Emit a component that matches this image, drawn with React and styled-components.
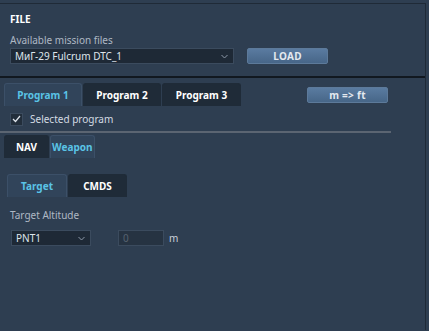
import React from 'react';
import styled, { createGlobalStyle } from 'styled-components';

const Global = createGlobalStyle`
  html, body {
    margin: 0;
    padding: 0;
    background: #2e3e51;
  }
  body {
    font-family: "Noto Sans", "DejaVu Sans", sans-serif;
    color: #d8dee6;
  }
`;

const Frame = styled.div`
  width: 429px;
  height: 331px;
  box-sizing: border-box;
  padding-top: 3px;
  background: #2e3e51;
  overflow: hidden;
`;

const Panel = styled.div`
  border-top: 1px solid #1f2a37;
  border-right: 1px solid #1f2a37;
  width: 426px;
  height: 327px;
  box-sizing: border-box;
`;

const FileSection = styled.section`
  padding: 9px 10px 0 10px;
  height: 72px;
  box-sizing: border-box;
`;

const Heading = styled.div`
  font-size: 10px;
  font-weight: 700;
  color: #ffffff;
  line-height: 12px;
`;

const Label = styled.div`
  font-size: 10px;
  color: #aeb8c4;
  line-height: 12px;
  margin-top: ${p => p.$top || 0}px;
  margin-left: ${p => p.$left || 0}px;
`;

const Row = styled.div`
  display: flex;
  align-items: center;
  margin-top: ${p => p.$top || 0}px;
  margin-left: ${p => p.$left || 0}px;
`;

const Select = styled.div`
  width: ${p => p.$w}px;
  height: 16px;
  box-sizing: border-box;
  background: #1e2936;
  border: 1px solid #3b4b5e;
  display: flex;
  align-items: center;
  justify-content: space-between;
  padding: 0 5px 0 4px;
  font-size: 10px;
  color: #dfe5ec;
`;

const Chevron = () => (
  <svg width="7" height="5" viewBox="0 0 7 5">
    <path d="M0.5 1 L3.5 4 L6.5 1" fill="none" stroke="#8c99a8" strokeWidth="1" />
  </svg>
);

const Button = styled.button`
  width: ${p => p.$w}px;
  height: 16px;
  margin-left: ${p => p.$left || 0}px;
  border: 1px solid #5d7a9a;
  border-radius: 2px;
  background: linear-gradient(#5a7ba0, #476688);
  color: #e4e9ef;
  font-family: "Noto Sans", "DejaVu Sans", sans-serif;
  font-weight: 700;
  font-size: 10px;
  letter-spacing: 0.3px;
  padding: 0;
  line-height: 14px;
`;

const Divider = styled.div`
  height: 2px;
  background: #111820;
`;

const ProgramBar = styled.div`
  display: flex;
  align-items: center;
  margin-top: 5px;
  padding-left: 4px;
`;

const TabRow = styled.div`
  display: flex;
  gap: 1px;
  margin-left: ${p => p.$left || 0}px;
  margin-top: ${p => p.$top || 0}px;
`;

const Tab = styled.div`
  width: ${p => p.$w}px;
  height: 23px;
  box-sizing: border-box;
  display: flex;
  align-items: center;
  justify-content: ${p => p.$align || 'center'};
  padding-left: ${p => p.$pad || 0}px;
  font-size: 10px;
  font-weight: 700;
  border-radius: 3px 3px 0 0;
  background: ${p => (p.$active ? '#31445a' : '#1f2b38')};
  color: ${p => (p.$active ? '#5ac3e6' : '#ffffff')};
  border: 1px solid ${p => (p.$active ? '#3c5068' : '#1f2b38')};
  border-bottom: none;
`;

const CheckRow = styled.div`
  display: flex;
  align-items: center;
  gap: 7px;
  margin: 6px 0 0 10px;
  font-size: 10px;
  color: #d4dbe3;
`;

const Box = styled.div`
  width: 13px;
  height: 13px;
  box-sizing: border-box;
  background: #222e3b;
  border: 1px solid #3b4b5e;
  display: flex;
  align-items: center;
  justify-content: center;
`;

const Rule = styled.div`
  width: 391px;
  height: 2px;
  background: #5b6572;
  margin-top: 5px;
`;

const Input = styled.div`
  width: 46px;
  height: 16px;
  box-sizing: border-box;
  margin-left: 27px;
  background: #263342;
  border: 1px solid #3b4b5e;
  font-size: 10px;
  color: #56626f;
  padding-left: 4px;
  line-height: 14px;
`;

const Unit = styled.span`
  margin-left: 5px;
  font-size: 10px;
  color: #c8d0da;
`;

export default function App() {
  return (
    <Frame>
      <Global />
      <Panel>
        <FileSection>
          <Heading>FILE</Heading>
          <Label $top={9}>Available mission files</Label>
          <Row $top={2}>
            <Select $w={224}>
              <span>МиГ-29 Fulcrum DTC_1</span>
              <Chevron />
            </Select>
            <Button $w={81} $left={13}>LOAD</Button>
          </Row>
        </FileSection>
        <Divider />
        <ProgramBar>
          <TabRow>
            <Tab $w={78} $active>Program 1</Tab>
            <Tab $w={78}>Program 2</Tab>
            <Tab $w={79}>Program 3</Tab>
          </TabRow>
          <Button $w={81} $left={66}>m =&gt; ft</Button>
        </ProgramBar>
        <CheckRow>
          <Box>
            <svg width="9" height="8" viewBox="0 0 9 8">
              <path d="M1 4 L3.5 6.5 L8 1" fill="none" stroke="#dfe5ec" strokeWidth="1.2" />
            </svg>
          </Box>
          <span>Selected program</span>
        </CheckRow>
        <Rule />
        <TabRow $left={4} $top={2}>
          <Tab $w={45}>NAV</Tab>
          <Tab $w={45} $active $align="flex-start" $pad={1}>Weapon</Tab>
        </TabRow>
        <TabRow $left={7} $top={16}>
          <Tab $w={60} $active>Target</Tab>
          <Tab $w={59}>CMDS</Tab>
        </TabRow>
        <Label $top={12} $left={10}>Target Altitude</Label>
        <Row $top={9} $left={11}>
          <Select $w={80}>
            <span>PNT1</span>
            <Chevron />
          </Select>
          <Input>0</Input>
          <Unit>m</Unit>
        </Row>
      </Panel>
    </Frame>
  );
}
